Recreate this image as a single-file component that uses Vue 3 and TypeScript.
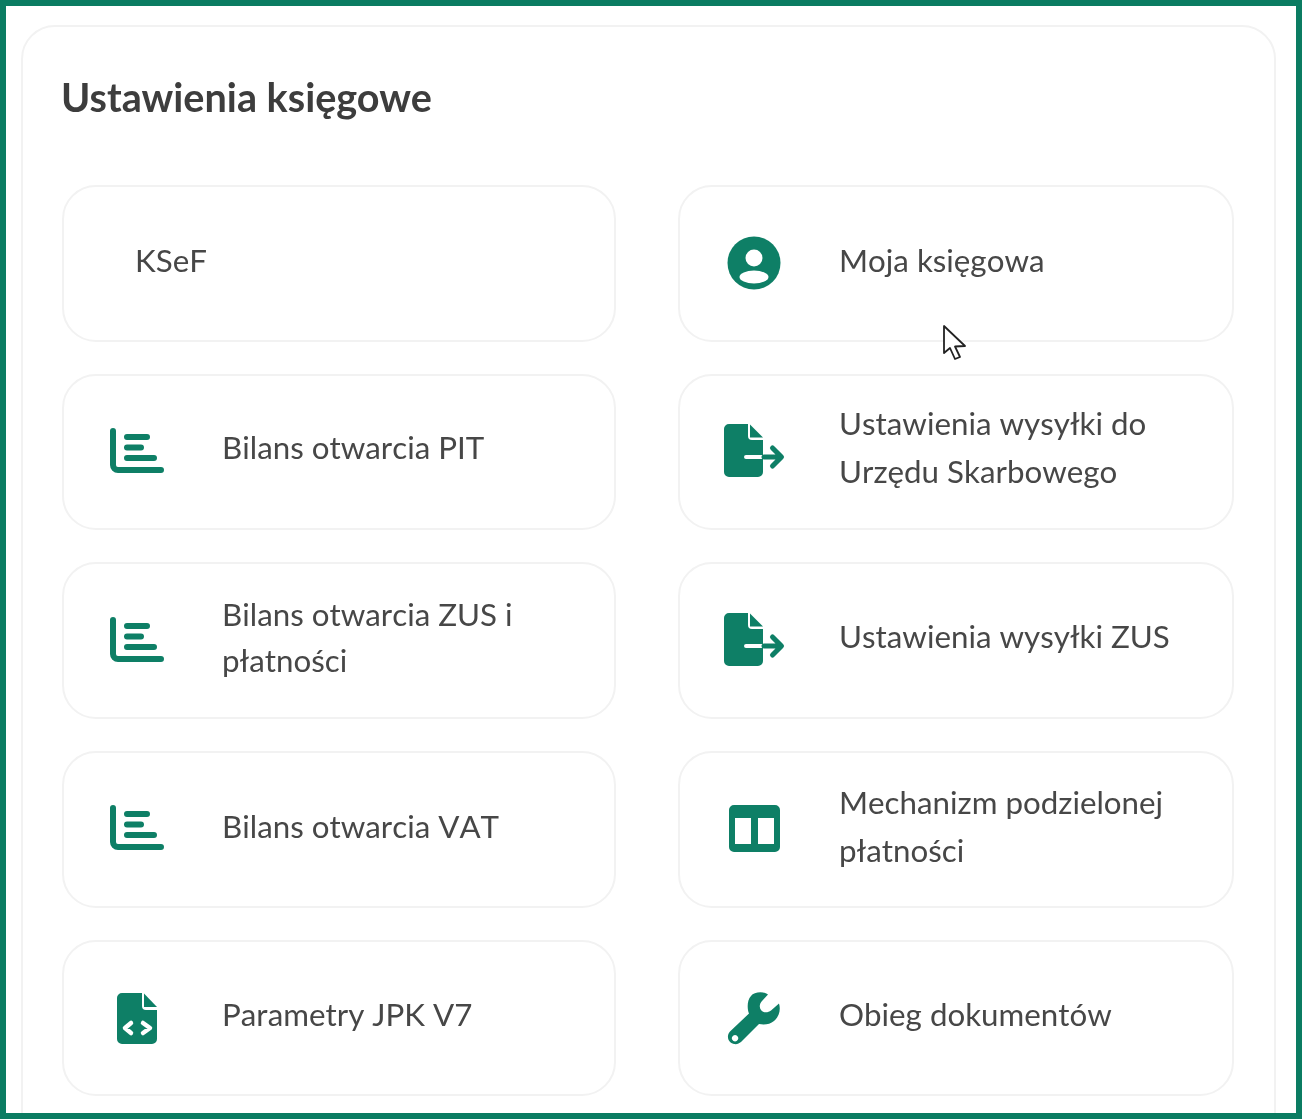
<script setup lang="ts">
interface Tile {
  label: string[];
  icon: string;
  shift?: 'up' | 'slight';
}
const tiles: Tile[] = [
  { label: ['KSeF'], icon: '' },
  { label: ['Moja księgowa'], icon: 'user' },
  { label: ['Bilans otwarcia PIT'], icon: 'chart', shift: 'up' },
  { label: ['Ustawienia wysyłki do', 'Urzędu Skarbowego'], icon: 'export', shift: 'up' },
  { label: ['Bilans otwarcia ZUS i', 'płatności'], icon: 'chart', shift: 'slight' },
  { label: ['Ustawienia wysyłki ZUS'], icon: 'export', shift: 'up' },
  { label: ['Bilans otwarcia VAT'], icon: 'chart' },
  { label: ['Mechanizm podzielonej', 'płatności'], icon: 'columns' },
  { label: ['Parametry JPK V7'], icon: 'code', shift: 'up' },
  { label: ['Obieg dokumentów'], icon: 'wrench', shift: 'up' },
];
</script>

<template>
  <div class="frame">
    <section class="card">
      <h1 class="title">Ustawienia księgowe</h1>
      <div class="grid">
        <a v-for="t in tiles" :key="t.label[0]" class="tile" :class="{ 'no-icon': !t.icon }">
          <span v-if="t.icon" class="icon-box">
            <svg width="64" height="64" viewBox="-32 -32 64 64" class="icon">
              <template v-if="t.icon === 'user'">
                <circle cx="0" cy="0" r="26.500" class="fill" />
                <circle cx="0" cy="-5" r="8.500" fill="#fff" />
                <ellipse cx="0" cy="14" rx="14.500" ry="6.500" fill="#fff" />
              </template>
              <g v-else-if="t.icon === 'chart'" transform="translate(-1 1)">
                <path d="M-24 -22V12a5 5 0 0 0 5 5H24" class="line" />
                <path d="M-10 -16H10M-10 -5.500H4M-10 5H17" class="line" />
              </g>
              <g v-else-if="t.icon === 'export'" transform="translate(-1 1)">
                <path class="fill" d="M-24 -29H-5V-17a4 4 0 0 0 4 4H10V2H-7a2 2 0 0 0 0 4H10V19a5 5 0 0 1-5 5H-24a5 5 0 0 1-5-5V-24a5 5 0 0 1 5-5Z" />
                <path class="fill" d="M-3 -28.500L10 -15.500H-3Z" />
                <path d="M11 4H27M19.500 -5L28.500 4L19.500 13" class="line thin" />
              </g>
              <template v-else-if="t.icon === 'columns'">
                <path class="fill" fill-rule="evenodd" d="M-20 -24H21a5 5 0 0 1 5 5V18a5 5 0 0 1-5 5H-20a5 5 0 0 1-5-5V-19a5 5 0 0 1 5-5ZM-19 -11V15H-3V-11ZM4 -11V15H20V-11Z" />
              </template>
              <g v-else-if="t.icon === 'code'" transform="translate(-1 1)">
                <path class="fill" d="M-15 -26H5V-13a4 4 0 0 0 4 4H20V20a5 5 0 0 1-5 5H-15a5 5 0 0 1-5-5V-21a5 5 0 0 1 5-5Z" />
                <path class="fill" d="M7 -25.500L20 -12H7Z" />
                <path d="M-6 4L-12 9L-6 14M6 4L13 9L6 14" class="white" />
              </g>
              <g v-else transform="translate(-1 0)">
                <path class="fill" fill-rule="evenodd" d="M15 -23.500C10 -27 1 -26 -2 -22C-6 -18 -6 -9 -4 -4.500L-23 13.500C-27 18 -25 25 -19 26C-16 26.500 -14 25.500 -12 24L6 6C11 7 17 6.500 21 3C26 -1 28 -8 26 -14.500L18 -7.500C15 -5 10 -5 8 -8C6 -11 6.500 -14 9 -17ZM-18 17a3.200 3.200 0 1 0 0.100 0Z" />
              </g>
            </svg>
          </span>
          <span class="label" :class="t.shift">
            <span v-for="line in t.label" :key="line" class="line-text">{{ line }}</span>
          </span>
        </a>
      </div>
    </section>
    <svg class="cursor" width="26" height="38" viewBox="0 0 26 38">
      <path d="M2 2V29L8 24L13 35L18 33L13 22.500L23 22Z" fill="#fff" stroke="#222" stroke-width="1.800" stroke-linejoin="round" />
    </svg>
  </div>
</template>

<style scoped>
.frame {
  position: relative;
  box-sizing: border-box;
  width: 1302px;
  height: 1119px;
  border: 6px solid #0b7c62;
  overflow: hidden;
  background: #fff;
  font-family: Lato, "Liberation Sans", sans-serif;
  color: #474747;
}
.card {
  box-sizing: border-box;
  margin: 19px 20px 0 15px;
  padding: 0 40px 60px 39px;
  border: 2px solid #f2f2f2;
  border-radius: 34px;
  filter: blur(0.4px);
}
.title {
  margin: 0 0 0 -1px;
  padding: 41px 0 59px;
  font-size: 39.600px;
  line-height: 58px;
  font-weight: 700;
  color: #3d3d3d;
}
.grid {
  display: grid;
  grid-template-columns: 554px 556px;
  column-gap: 62px;
  row-gap: 32.200px;
}
.tile {
  box-sizing: border-box;
  display: flex;
  align-items: center;
  height: 156.500px;
  padding-left: 31px;
  border: 2px solid #f2f2f2;
  border-radius: 34px;
}
.icon-box {
  flex: none;
  width: 86px;
  display: flex;
  justify-content: center;
  align-items: center;
}
.icon { display: block; flex: none; }
.fill { fill: #0e7f66; }
.line {
  fill: none;
  stroke: #0e7f66;
  stroke-width: 6;
  stroke-linecap: round;
  stroke-linejoin: round;
}
.line.thin { stroke-width: 5; }
.white {
  fill: none;
  stroke: #fff;
  stroke-width: 4.500;
  stroke-linecap: round;
  stroke-linejoin: round;
}
.label {
  display: flex;
  flex-direction: column;
  margin: -6px 0 0 42px;
  font-size: 31.300px;
  line-height: 48px;
  font-kerning: none;
}
.label.up { margin-top: -9px; }
.label.slight { margin-top: -7px; line-height: 46px; }
.tile:nth-child(odd) .label { margin-left: 41px; }
.tile.no-icon .label { margin-left: 40px; }
.line-text { display: block; white-space: nowrap; }
.cursor {
  position: absolute;
  left: 936px;
  top: 318px;
}
</style>

<style>
html, body { margin: 0; padding: 0; background: #fff; }
</style>
